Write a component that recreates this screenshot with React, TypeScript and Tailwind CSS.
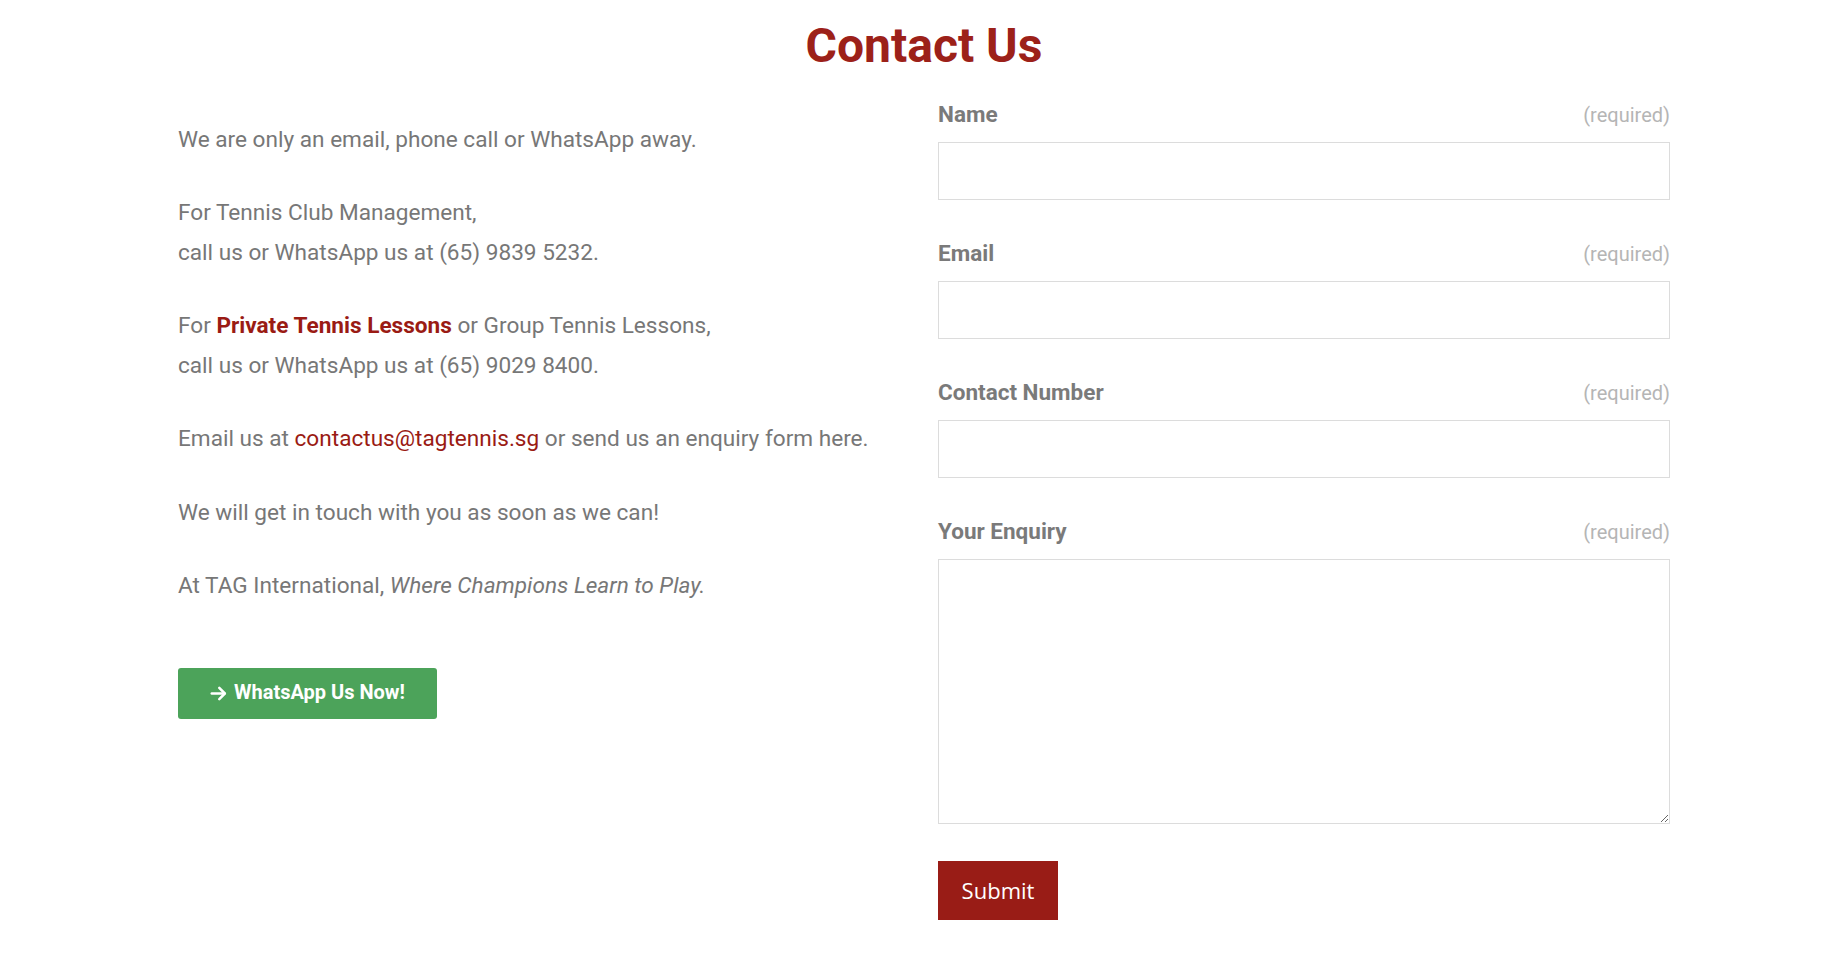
import React from "react"

const fields = [
  { label: "Name", type: "input" },
  { label: "Email", type: "input" },
  { label: "Contact Number", type: "input" },
  { label: "Your Enquiry", type: "textarea" },
]

function ArrowRight() {
  return (
    <svg width="19" height="19" viewBox="0 0 24 24" fill="none" stroke="currentColor" strokeWidth="3.2" strokeLinecap="round" strokeLinejoin="round">
      <path d="M3.5 12h16" />
      <path d="M13 5l7 7-7 7" />
    </svg>
  )
}

export default function App() {
  return (
    <div className="min-h-screen bg-white font-['Roboto',sans-serif]">
      <div className="w-[1492px] ml-[178px] pt-[17px]">
        <h1 className="text-center text-[48px] leading-[1.2] font-bold text-[#9c2119]">Contact Us</h1>

        <div className="grid grid-cols-2 gap-[28px] mt-[25px]">
          {/* Left: contact details */}
          <div className="pt-[20px] text-[22.6px] leading-[39.5px] text-[#777777]">
            <p className="mb-[34px]">We are only an email, phone call or WhatsApp away.</p>
            <p className="mb-[34px]">
              For Tennis Club Management,
              <br />
              call us or WhatsApp us at (65) 9839 5232.
            </p>
            <p className="mb-[34px]">
              For <a href="#" className="font-bold text-[#9a1b14]">Private Tennis Lessons</a> or Group Tennis Lessons,
              <br />
              call us or WhatsApp us at (65) 9029 8400.
            </p>
            <p className="mb-[34px]">
              Email us at <a href="#" className="text-[#9a1b14]">contactus@tagtennis.sg</a> or send us an enquiry form here.
            </p>
            <p className="mb-[34px]">We will get in touch with you as soon as we can!</p>
            <p>
              At TAG International, <em>Where Champions Learn to Play.</em>
            </p>

            <a
              href="#"
              className="mt-[62px] inline-flex h-[51px] items-center gap-[6px] rounded-[3px] bg-[#4ca35a] pl-[31px] pr-[32px] text-[20px] font-bold text-white"
            >
              <ArrowRight />
              WhatsApp Us Now!
            </a>
          </div>

          {/* Right: enquiry form */}
          <form className="flex flex-col" onSubmit={(e) => e.preventDefault()}>
            {fields.map((f) => (
              <div key={f.label} className="mb-[39px]">
                <div className="flex h-[30px] items-center justify-between">
                  <label className="text-[22.5px] font-bold text-[#7a7a7a]">{f.label}</label>
                  <span className="text-[20px] text-[#b5b5b5]">(required)</span>
                </div>
                {f.type === "input" ? (
                  <input className="mt-[12px] block h-[58px] w-full border border-[#dcdcdc] px-3 outline-none" />
                ) : (
                  <textarea className="mt-[12px] block h-[265px] w-full border border-[#dcdcdc] p-3 outline-none" />
                )}
              </div>
            ))}
            <div className="-mt-[2px]">
              <button
                type="submit"
                className="h-[59px] w-[120px] bg-[#991c16] font-['Open_Sans',sans-serif] text-[22px] text-white"
              >
                Submit
              </button>
            </div>
          </form>
        </div>
      </div>
    </div>
  )
}
